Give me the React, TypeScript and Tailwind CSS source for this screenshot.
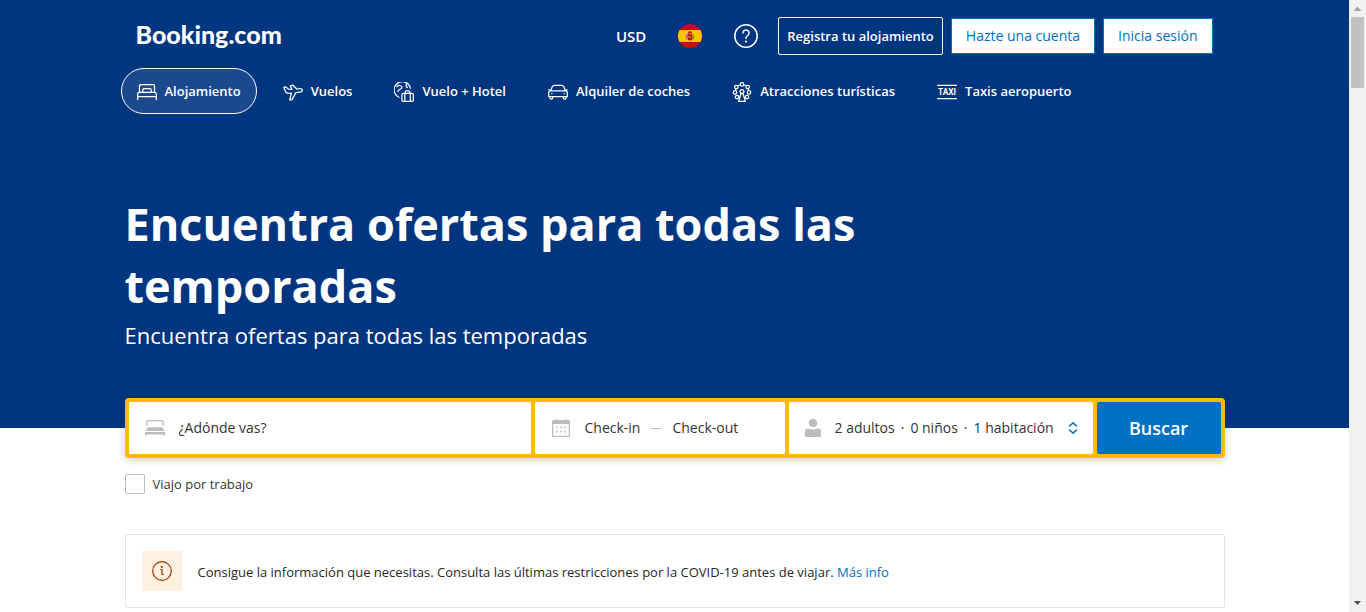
import type { ReactNode } from 'react';

const NavIcon = ({ children }: { children: ReactNode }) => (
  <svg
    aria-hidden="true"
    className="size-5 shrink-0"
    viewBox="0 0 24 24"
    fill="none"
    stroke="currentColor"
    strokeWidth="1.5"
    strokeLinecap="round"
    strokeLinejoin="round"
  >
    {children}
  </svg>
);

const navItems: { label: string; icon: ReactNode }[] = [
  {
    label: 'Alojamiento',
    icon: (
      <NavIcon>
        <path d="M3 12.500V4.500A1.500 1.500 0 0 1 4.500 3h15A1.500 1.500 0 0 1 21 4.500v8M.8 21v-6.500a2.200 2.200 0 0 1 2.200-2.200h18a2.200 2.200 0 0 1 2.200 2.200V21M.8 17.500h22.400M7 12V9.200A1.200 1.200 0 0 1 8.200 8h7.600A1.200 1.200 0 0 1 17 9.200V12" />
      </NavIcon>
    ),
  },
  {
    label: 'Vuelos',
    icon: (
      <NavIcon>
        <path d="M.9 6.500l2-.7 3.600 2.700 4.200.3L8.800 4.500l2.800-.9 5 4.800 3.800-.5c1.500-.1 2.800.8 2.800 2 0 1.300-1.300 2.200-3 2.300l-4.700.5-4.700 8.500-2.700.4 2-8.300-3.600.2c-1.400 0-2.500-.6-3.300-1.700L.9 6.500z" />
      </NavIcon>
    ),
  },
  {
    label: 'Vuelo + Hotel',
    icon: (
      <NavIcon>
        <path d="M6 18.300A9.800 9.800 0 1 1 19.600 7.500" />
        <path d="M3.500 5.500c2.300-2.500 6-1.300 6 1 0 2.500-4.700 2-4.700 5M15 2.500c-1 2-.5 3.200 1 4.200" />
        <rect x="9.500" y="13.500" width="13.700" height="9.700" rx="1.500" />
        <path d="M13 23v-9.500M19.600 23v-9.500M13.500 13.500v-1.700a1.200 1.200 0 0 1 1.200-1.200h3a1.200 1.200 0 0 1 1.300 1.200v1.700" />
      </NavIcon>
    ),
  },
  {
    label: 'Alquiler de coches',
    icon: (
      <NavIcon>
        <path d="M3.200 10.500l2-5A2.500 2.500 0 0 1 7.500 4h9a2.500 2.500 0 0 1 2.300 1.500l2 5M3.500 10.500h17a2.700 2.700 0 0 1 2.700 2.700v4.300H.8v-4.300a2.700 2.700 0 0 1 2.700-2.700zM2.300 17.500v1.300a1.700 1.700 0 0 0 3.400 0v-1.300M18.300 17.500v1.300a1.700 1.700 0 0 0 3.400 0v-1.300M4.500 14h.3M19.200 14h.3M1 9.500h1.500M21.500 9.500H23" />
      </NavIcon>
    ),
  },
  {
    label: 'Atracciones turísticas',
    icon: (
      <NavIcon>
        <circle cx="12" cy="2.900" r="2.100" />
        <circle cx="5.200" cy="6" r="2.100" />
        <circle cx="18.800" cy="6" r="2.100" />
        <circle cx="3.600" cy="12.500" r="2.100" />
        <circle cx="20.400" cy="12.500" r="2.100" />
        <circle cx="6" cy="18" r="2.100" />
        <circle cx="18" cy="18" r="2.100" />
        <circle cx="12" cy="11.500" r="2.300" />
        <path d="M10.800 13.800L8 23.200h8l-2.800-9.400M9.800 3.300L7.200 4.500M14.200 3.300l2.600 1.200M4.500 8.200l-.4 2M19.500 8.200l.4 2" />
      </NavIcon>
    ),
  },
  {
    label: 'Taxis aeropuerto',
    icon: (
      <NavIcon>
        <path d="M.5 4h23M.5 20h23" />
        <text
          x="12"
          y="16"
          textAnchor="middle"
          fill="currentColor"
          stroke="none"
          className="font-['Liberation_Sans_Narrow','Roboto',sans-serif] text-[10px] font-bold"
        >
          TAXI
        </text>
      </NavIcon>
    ),
  },
];

const SpainFlag = () => (
  <svg aria-hidden="true" className="size-6 rounded-full" viewBox="0 0 24 24">
    <path fill="#c60b1e" d="M0 0h24v24H0z" />
    <path fill="#ffc400" d="M0 6h24v12H0z" />
    <path fill="#ad1519" d="M9.500 9.500h5v4.500a2.500 2.500 0 0 1-5 0z" />
    <path fill="#c8b100" d="M10.200 12h1.600v1.600h-1.600zM12.500 10.200h1.300v1.300h-1.300z" />
    <path fill="#a78a8e" d="M8 10h1v6H8zM15 10h1v6h-1zM12.200 13h1.300v1.300h-1.300z" />
    <path fill="#ad1519" d="M10 9c0-1.200 1-1.700 2-1.700s2 .5 2 1.700zM7.500 12.500h1v1h-1zM15.500 12.500h1v1h-1z" />
  </svg>
);

const Header = () => (
  <header className="pt-[17px]">
    <div className="flex flex-wrap items-center gap-y-2 pr-3 pl-[11px]">
      <a href="#inicio" className="mr-auto pb-1 font-['Lato',sans-serif] text-[25px] leading-8 font-black">
        Booking.com
      </a>
      <button type="button" className="px-4 text-[15px] leading-6 font-semibold">USD</button>
      <button type="button" aria-label="Selecciona tu idioma" className="px-4">
        <SpainFlag />
      </button>
      <button type="button" aria-label="Atención al cliente" className="mr-1 px-4">
        <svg aria-hidden="true" className="size-6" viewBox="0 0 24 24" fill="none" stroke="currentColor" strokeWidth="1.500" strokeLinecap="round">
          <circle cx="12" cy="12" r="11.200" />
          <path d="M9 9a3 3 0 1 1 4.700 2.500c-1 .7-1.700 1.300-1.700 2.600v.3" />
          <circle cx="12" cy="17.600" r="1.100" fill="currentColor" stroke="none" />
        </svg>
      </button>
      <div className="flex items-center gap-2">
        <a href="#registra" className="rounded-xs border border-white px-2 py-2 text-[13px] leading-5 font-semibold">
          Registra tu alojamiento
        </a>
        <a href="#cuenta" className="border border-[#0071c2] bg-white px-3.5 py-[7px] text-sm leading-5 font-medium text-[#0071c2]">
          Hazte una cuenta
        </a>
        <a href="#sesion" className="border border-[#0071c2] bg-white px-3.5 py-[7px] text-sm leading-5 font-medium text-[#0071c2]">
          Inicia sesión
        </a>
      </div>
    </div>
    <nav className="mt-[13px] -ml-1 flex flex-wrap gap-2.5">
      {navItems.map(({ label, icon }, i) => (
        <a
          key={label}
          href={`#servicio-${i + 1}`}
          aria-current={i === 0 ? 'page' : undefined}
          className={
            i === 0
              ? 'flex h-[46px] items-center gap-2 rounded-full border border-white bg-white/10 px-[15px] pt-0.5 text-[13px] font-semibold'
              : 'flex h-[46px] items-center gap-2 rounded-full border border-transparent px-[15px] pt-0.5 text-[13px] font-semibold'
          }
        >
          {icon}
          {label}
        </a>
      ))}
    </nav>
  </header>
);

const SearchForm = () => (
  <form
    onSubmit={(e) => e.preventDefault()}
    className="grid grid-cols-[402fr_250fr_304fr_124fr] gap-1 rounded bg-[#febb02] p-1 text-sm font-medium text-[#333333] shadow-[0_2px_8px_rgba(0,0,0,0.2)]"
  >
    <label className="flex h-[52px] items-center gap-[14px] rounded-xs bg-white px-4">
      <svg aria-hidden="true" className="size-5 shrink-0" viewBox="0 0 20 20" fill="#bdbdbd">
        <path d="M1.200 8V4a2 2 0 0 1 2-2h13.600a2 2 0 0 1 2 2v4h-1.300V4.300a1 1 0 0 0-1-1h-13a1 1 0 0 0-1 1V8zM2.800 9.300h14.400l2.300 3.700H.5zM0 14h20v3.800h-1.200V16.500H1.200v1.300H0z" />
      </svg>
      <input type="text" aria-label="Destino" placeholder="¿Adónde vas?" className="min-w-0 flex-1 outline-none placeholder:text-[#333333]" />
    </label>
    <div className="flex items-center rounded-xs bg-white px-4">
      <svg aria-hidden="true" className="mr-[14px] size-5 shrink-0" viewBox="0 0 20 20" fill="#bdbdbd">
        <path d="M1 3.500A1.500 1.500 0 0 1 2.500 2H4.500V.800h1.200V2h8.600V.800h1.200V2h2A1.500 1.500 0 0 1 19 3.500v14a1.500 1.500 0 0 1-1.500 1.500h-15A1.500 1.500 0 0 1 1 17.500zM2.300 6v11.200c0 .3.200.5.500.5h14.400c.3 0 .5-.2.500-.5V6z" fillRule="evenodd" />
        <path d="M5 8.500h1.700v1.700H5zM9.200 8.500h1.700v1.700H9.200zM13.300 8.500H15v1.700h-1.700zM5 12.800h1.700v1.700H5zM9.200 12.800h1.700v1.700H9.200zM13.300 12.800H15v1.700h-1.700z" />
      </svg>
      <button type="button" className="whitespace-nowrap">Check-in</button>
      <span aria-hidden="true" className="mx-[11px] h-px w-[10px] bg-[#bdbdbd]" />
      <button type="button" className="whitespace-nowrap">Check-out</button>
    </div>
    <button type="button" className="flex items-center rounded-xs bg-white pr-[14px] pl-4 text-left">
      <svg aria-hidden="true" className="mr-[14px] h-5 w-4 shrink-0" viewBox="0 0 16 20" fill="#bdbdbd">
        <circle cx="8" cy="5" r="4.300" />
        <path d="M0 19v-5.500a3 3 0 0 1 3-3c1.500 0 2.500 1 5 1s3.500-1 5-1a3 3 0 0 1 3 3V19z" />
      </svg>
      <span className="flex flex-1 gap-1.5 whitespace-nowrap">
        <span>2 adultos</span>
        <span>·</span>
        <span>0 niños</span>
        <span>·</span>
        <span>1 habitación</span>
      </span>
      <svg aria-hidden="true" className="h-3 w-3 shrink-0" viewBox="0 0 12 12" fill="none" stroke="#0071c2" strokeWidth="1.500" strokeLinecap="round" strokeLinejoin="round">
        <path d="M2.500 4L6 .9 9.500 4M2.500 8L6 11.100 9.500 8" />
      </svg>
    </button>
    <button type="submit" className="rounded-xs bg-[#0071c2] text-lg font-semibold text-white">
      Buscar
    </button>
  </form>
);

const ScrollRail = () => (
  <div aria-hidden="true" className="sticky top-0 flex h-screen w-[17px] shrink-0 flex-col items-center bg-[#f1f1f1]">
    <svg className="h-[17px] w-[17px]" viewBox="0 0 17 17" fill="#a3a3a3">
      <path d="M8.500 6.500L12.500 11h-8z" />
    </svg>
    <div className="h-[71px] w-[13px] bg-[#c1c1c1]" />
    <svg className="mt-auto h-[17px] w-[17px]" viewBox="0 0 17 17" fill="#505050">
      <path d="M5 6h7L8.500 10z" />
    </svg>
  </div>
);

export default function App() {
  return (
    <div className="flex min-h-screen bg-white font-['Open_Sans','Noto_Sans',sans-serif]">
      <div className="min-w-0 flex-1 pb-1">
        <div className="bg-[#003580] pb-[77px] text-white">
          <div className="mx-auto max-w-[1100px]">
            <Header />
            <div className="mt-[79px]">
              <h1 className="max-w-[780px] text-[45px] leading-[62px] font-bold">
                Encuentra ofertas para todas las temporadas
              </h1>
              <p className="mt-0.5 text-[22px] leading-8">Encuentra ofertas para todas las temporadas</p>
            </div>
          </div>
        </div>
        <main className="mx-auto -mt-[30px] max-w-[1100px]">
          <SearchForm />
          <label className="mt-4 flex w-fit items-center gap-2 text-[13px] leading-5 text-[#333333]">
            <input type="checkbox" className="size-5 appearance-none rounded-xs border border-[#bdbdbd] bg-white checked:bg-[#0071c2]" />
            Viajo por trabajo
          </label>
          <section className="mt-10 flex items-center gap-4 rounded-xs border border-[#e6e6e6] p-4">
            <span className="flex size-10 shrink-0 items-center justify-center rounded-xs bg-[#fff0e0]">
              <svg aria-hidden="true" className="size-5" viewBox="0 0 20 20" fill="none" stroke="#923e01" strokeWidth="1.200" strokeLinecap="round" strokeLinejoin="round">
                <circle cx="10" cy="10" r="9.300" />
                <path d="M8.700 8.500H10v5h1.500" />
                <circle cx="9.800" cy="5.800" r=".5" fill="#923e01" />
              </svg>
            </span>
            <p className="pt-0.5 text-[13px] leading-5 text-[#262626]">
              Consigue la información que necesitas. Consulta las últimas restricciones por la COVID-19 antes de viajar.{' '}
              <a href="#mas-info" className="text-[#0071c2]">Más info</a>
            </p>
          </section>
        </main>
      </div>
      <ScrollRail />
    </div>
  );
}
